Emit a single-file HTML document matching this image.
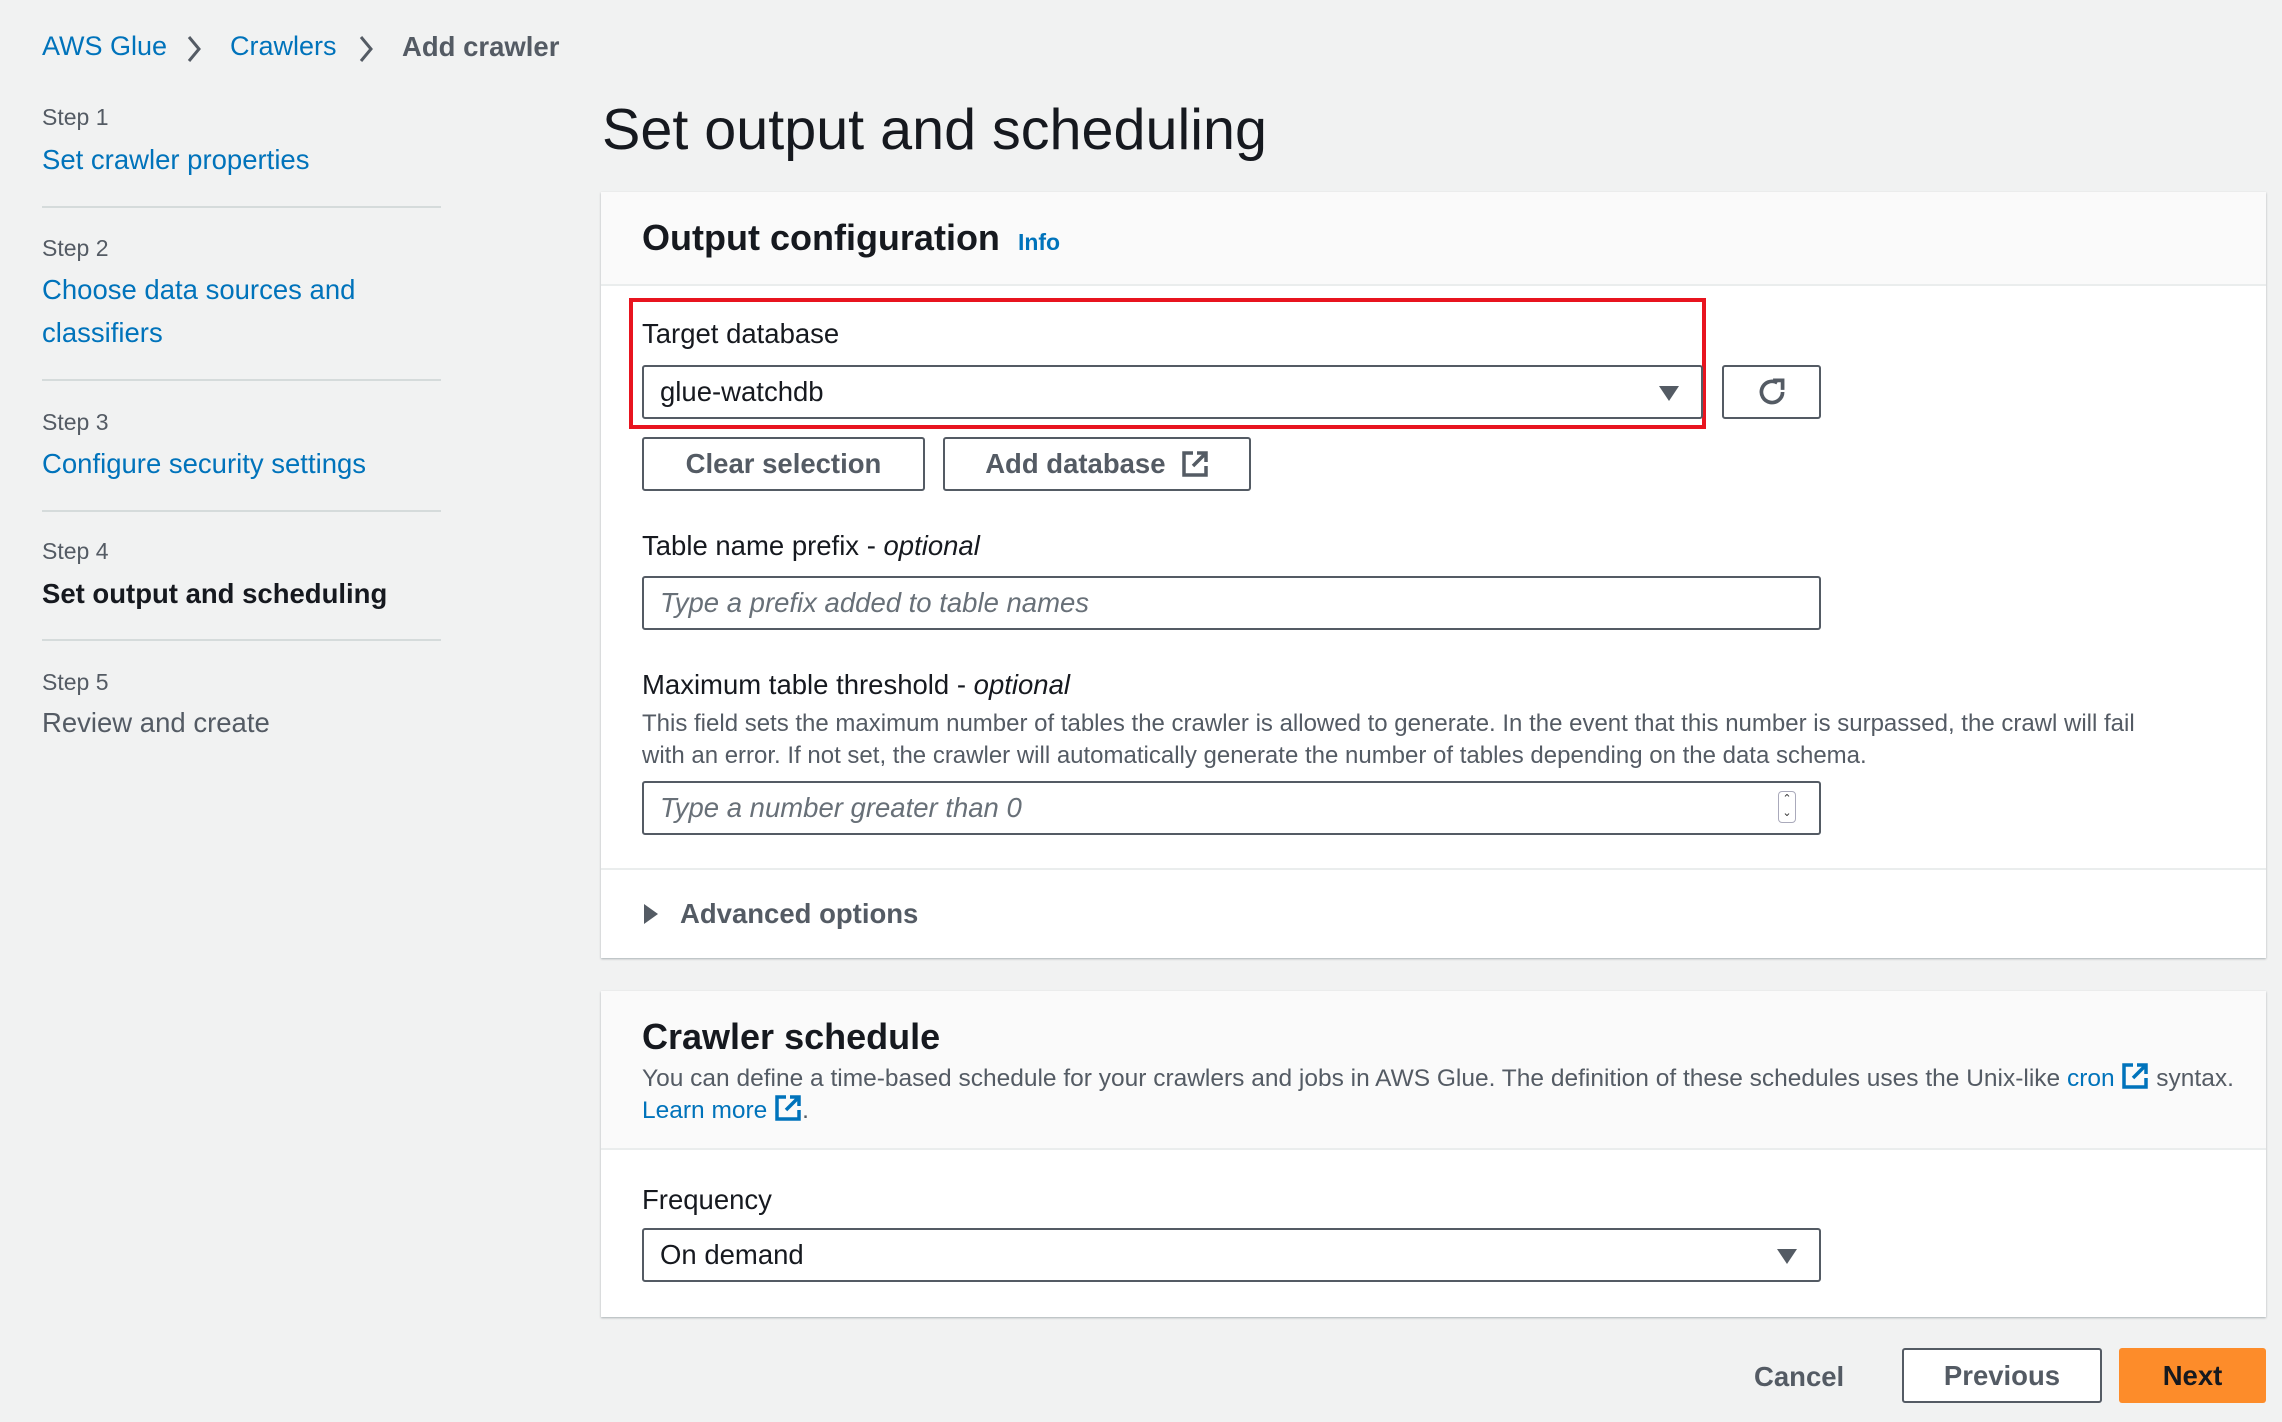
<!DOCTYPE html>
<html><head><meta charset="utf-8"><style>
*{box-sizing:border-box;margin:0;padding:0}
body{width:2282px;height:1422px;background:#f1f2f2;font-family:"Liberation Sans",sans-serif;color:#16191f;position:relative;overflow:hidden}
.a{position:absolute;white-space:nowrap}
.link{color:#0073bb}
.g{color:#545b64}
.step{font-size:23px;color:#545b64}
.nav{font-size:27.5px}
.hr{position:absolute;left:42px;width:399px;height:2px;background:#d5dbdb}
.panel{position:absolute;left:601px;width:1665px;background:#fff;box-shadow:0 1px 2px rgba(0,28,36,.3);}
.ph{position:absolute;left:0;top:0;width:100%;background:#fafafa;border-bottom:2px solid #eaeded}
.inp{position:absolute;border:2px solid #545b64;border-radius:3px;background:#fff;font-size:27.5px;padding-left:16px;display:flex;align-items:center}
.ph2{color:#687078;font-style:italic}
.btn{position:absolute;border:2px solid #545b64;border-radius:3px;background:#fff;font-size:27.5px;font-weight:bold;color:#545b64;display:flex;align-items:center;justify-content:center}
.lbl{font-size:27.5px}
.caret{position:absolute;width:0;height:0;border-left:10px solid transparent;border-right:10px solid transparent;border-top:15px solid #545b64}
.ext{display:inline-block;vertical-align:-4px}
</style></head><body>
<div class="a link" style="left:42px;top:31px;font-size:27px">AWS Glue</div>
<svg class="a" style="left:186px;top:34px" width="16" height="30" viewBox="0 0 16 30"><path d="M3 3 L13 15 L3 27" stroke="#545b64" stroke-width="3" fill="none"/></svg>
<div class="a link" style="left:230px;top:31px;font-size:27px">Crawlers</div>
<svg class="a" style="left:358px;top:34px" width="16" height="30" viewBox="0 0 16 30"><path d="M3 3 L13 15 L3 27" stroke="#545b64" stroke-width="3" fill="none"/></svg>
<div class="a g" style="left:402px;top:31px;font-weight:bold;font-size:27.5px">Add crawler</div>

<div class="a step" style="left:42px;top:104px">Step 1</div>
<div class="a nav link" style="left:42px;top:144px">Set crawler properties</div>
<div class="hr" style="top:206px"></div>
<div class="a step" style="left:42px;top:235px">Step 2</div>
<div class="a nav link" style="left:42px;top:274px">Choose data sources and</div>
<div class="a nav link" style="left:42px;top:317px">classifiers</div>
<div class="hr" style="top:379px"></div>
<div class="a step" style="left:42px;top:409px">Step 3</div>
<div class="a nav link" style="left:42px;top:448px">Configure security settings</div>
<div class="hr" style="top:510px"></div>
<div class="a step" style="left:42px;top:538px">Step 4</div>
<div class="a nav" style="left:42px;top:578px;font-weight:bold;font-size:27.5px">Set output and scheduling</div>
<div class="hr" style="top:639px"></div>
<div class="a step" style="left:42px;top:669px">Step 5</div>
<div class="a nav g" style="left:42px;top:707px">Review and create</div>

<div class="a" style="left:602px;top:97px;font-size:57.5px">Set output and scheduling</div>

<div class="panel" style="top:192px;height:766px">
 <div class="ph" style="height:94px"></div>
 <div class="a" style="left:41px;top:25px;font-size:36px;font-weight:bold">Output configuration <span class="link" style="font-size:23px;margin-left:8px">Info</span></div>
 <div class="a" style="left:28px;top:106px;width:1077px;height:131px;border:4px solid #e8141f"></div>
 <div class="a lbl" style="left:41px;top:126px">Target database</div>
 <div class="inp" style="left:41px;top:173px;width:1061px;height:54px">glue-watchdb</div>
 <div class="caret" style="left:1058px;top:194px"></div>
 <div class="btn" style="left:1121px;top:173px;width:99px;height:54px"><svg width="36" height="36" viewBox="0 0 34 34"><path d="M27 17 A10 10 0 1 1 22 8.3" stroke="#545b64" stroke-width="3.5" fill="none"/><path d="M18 6 L27 6 L27 15" stroke="#545b64" stroke-width="3.5" fill="none"/></svg></div>
 <div class="btn" style="left:41px;top:245px;width:283px;height:54px">Clear selection</div>
 <div class="btn" style="left:342px;top:245px;width:308px;height:54px">Add database&nbsp;&nbsp;<svg width="28" height="28" viewBox="0 0 28 28"><path d="M12 3 H3 V25 H25 V16" stroke="#545b64" stroke-width="3.5" fill="none"/><path d="M16 3 H25 V12 M25 3 L12 16" stroke="#545b64" stroke-width="3.5" fill="none"/></svg></div>
 <div class="a lbl" style="left:41px;top:338px">Table name prefix - <i>optional</i></div>
 <div class="inp" style="left:41px;top:384px;width:1179px;height:54px"><span class="ph2">Type a prefix added to table names</span></div>
 <div class="a lbl" style="left:41px;top:477px">Maximum table threshold - <i>optional</i></div>
 <div class="a g" style="left:41px;top:516px;font-size:24px;line-height:32px;width:1530px;white-space:normal">This field sets the maximum number of tables the crawler is allowed to generate. In the event that this number is surpassed, the crawl will fail with an error. If not set, the crawler will automatically generate the number of tables depending on the data schema.</div>
 <div class="inp" style="left:41px;top:589px;width:1179px;height:54px"><span class="ph2">Type a number greater than 0</span></div>
 <div class="a" style="left:1177px;top:599px;width:18px;height:32px;border:1px solid #aab;border-radius:4px;font-size:11px;line-height:14px;text-align:center;color:#333">&#8963;<br>&#8964;</div>
 <div class="a" style="left:0;top:676px;width:100%;height:2px;background:#eaeded"></div>
 <svg class="a" style="left:42px;top:711px" width="16" height="22"><path d="M1 1 L15 11 L1 21Z" fill="#545b64"/></svg>
 <div class="a g" style="left:79px;top:706px;font-size:27.5px;font-weight:bold">Advanced options</div>
</div>

<div class="panel" style="top:991px;height:326px">
 <div class="ph" style="height:159px"></div>
 <div class="a" style="left:41px;top:25px;font-size:36px;font-weight:bold">Crawler schedule</div>
 <div class="a g" style="left:41px;top:71px;font-size:24.5px;line-height:32px">You can define a time-based schedule for your crawlers and jobs in AWS Glue. The definition of these schedules uses the Unix-like <span class="link">cron</span> <svg class="ext" width="28" height="28" viewBox="0 0 28 28"><path d="M12 3 H3 V25 H25 V16" stroke="#0073bb" stroke-width="3.5" fill="none"/><path d="M16 3 H25 V12 M25 3 L12 16" stroke="#0073bb" stroke-width="3.5" fill="none"/></svg> syntax.</div>
 <div class="a g" style="left:41px;top:103px;font-size:24.5px;line-height:32px"><span class="link">Learn more</span> <svg class="ext" width="28" height="28" viewBox="0 0 28 28"><path d="M12 3 H3 V25 H25 V16" stroke="#0073bb" stroke-width="3.5" fill="none"/><path d="M16 3 H25 V12 M25 3 L12 16" stroke="#0073bb" stroke-width="3.5" fill="none"/></svg>.</div>
 <div class="a lbl" style="left:41px;top:193px">Frequency</div>
 <div class="inp" style="left:41px;top:237px;width:1179px;height:54px">On demand</div>
 <div class="caret" style="left:1176px;top:258px"></div>
</div>

<div class="a g" style="left:1754px;top:1361px;font-size:27.5px;font-weight:bold">Cancel</div>
<div class="btn" style="left:1902px;top:1348px;width:200px;height:55px">Previous</div>
<div class="a" style="left:2119px;top:1348px;width:147px;height:55px;background:#fd8c2a;border-radius:3px;font-size:27.5px;font-weight:bold;display:flex;align-items:center;justify-content:center">Next</div>
</body></html>
